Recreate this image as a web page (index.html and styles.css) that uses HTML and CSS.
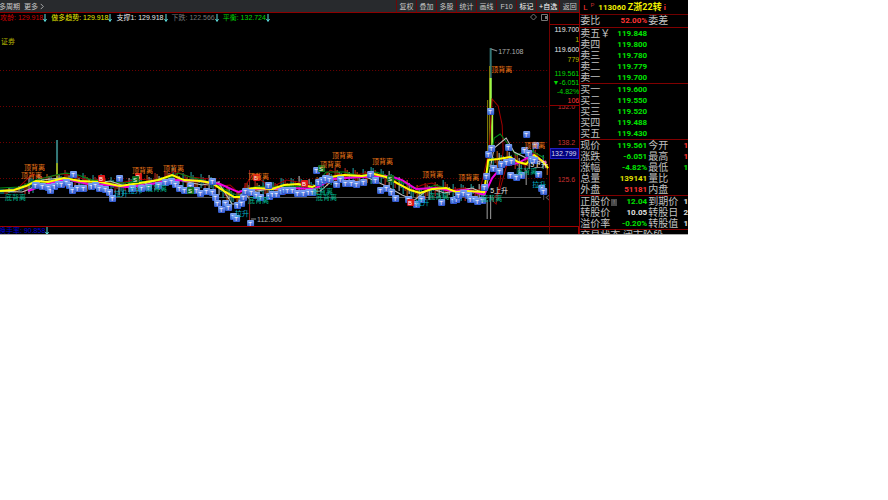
FILE: index.html
```html
<!DOCTYPE html>
<html lang="zh-CN">
<head>
    <meta charset="UTF-8">
    <meta name="viewport" content="width=device-width, initial-scale=1.0">
    <title>浙22转债 113060</title>
    <link rel="stylesheet" href="styles.css">
</head>
<body>
    <main class="terminal">
        <section class="main">
            <nav class="toolbar">
                <div class="periods">
                    <button type="button">多周期</button>
                    <button type="button">更多 <svg class="chevron" viewBox="0 0 4 8"><path d="M0.5 1 L3.5 4 L0.5 7"/></svg></button>
                </div>
                <div class="tools">
                    <button type="button">复权</button>
                    <button type="button">叠加</button>
                    <button type="button">多股</button>
                    <button type="button">统计</button>
                    <button type="button">画线</button>
                    <button type="button">F10</button>
                    <button type="button" class="bright">标记</button>
                    <button type="button" class="bright">+自选</button>
                    <button type="button">返回</button>
                </div>
            </nav>
            <div class="body">
                <div class="chart-col">
                    <div class="legend">
                        <span class="c-darkred">攻龄: 129.918<svg class="arrow" viewBox="0 0 4 8"><path d="M2 0V7M0.5 5L2 7.5L3.5 5"/></svg></span>
                        <span class="c-yellow">做多趋势: 129.918<svg class="arrow" viewBox="0 0 4 8"><path d="M2 0V7M0.5 5L2 7.5L3.5 5"/></svg></span>
                        <span class="c-white">支撑1: 129.918<svg class="arrow" viewBox="0 0 4 8"><path d="M2 0V7M0.5 5L2 7.5L3.5 5"/></svg></span>
                        <span class="c-dim">下跌: 122.566<svg class="arrow" viewBox="0 0 4 8"><path d="M2 0V7M0.5 5L2 7.5L3.5 5"/></svg></span>
                        <span class="c-green">平衡: 132.724<svg class="arrow" viewBox="0 0 4 8"><path d="M2 0V7M0.5 5L2 7.5L3.5 5"/></svg></span>
                        <svg class="corner" viewBox="0 0 18 8"><path d="M3.5 1L6.5 4L3.5 7L0.5 4Z"/><path d="M11.5 1.5H17.5V7.5H11.5Z"/><path class="fill" d="M15 3H17V6H15Z"/></svg>
                    </div>
                    <svg class="chart" id="chart" viewBox="0 22 549 204">
                        <defs>
                            <linearGradient id="blue" x1="0" y1="0" x2="0" y2="1">
                                <stop offset="0" stop-color="#7ea4f4"/>
                                <stop offset="1" stop-color="#2c54cc"/>
                            </linearGradient>
                        </defs>
                        <g class="grid">
                            <path d="M0 70.5H549M0 106.5H549M0 142.5H549M0 178.5H549"/>
                        </g>
                        <path class="level" d="M0 197.5H541M543.5 195V200M549 195L546 197.5L549 200"/>
                        <text class="stock" x="1" y="44">证券</text>
                        <g id="bars"></g>
                        <path class="spike" d="M57 140V165M490.500 48V110"/>
                        <path class="spike-hot" d="M57 163V186"/>
                        <path class="spike-olive" d="M489.500 66V160M487.500 100V165"/>
                        <path class="spike-lime" d="M490.500 78V115M492 112V150"/>
                        <path class="wick" d="M487 200V219M490.500 195V219M526 170V185"/>
                        <path class="drop" d="M249.500 170V222"/>
                        <g id="lines"></g>
                        <g id="marks"></g>
                        <g id="labels"></g>
                        <path class="leader" d="M491 49L497 51M251 219H256"/>
                        <text class="price" x="498" y="54">177.108</text>
                        <text class="price" x="257" y="222">112.900</text>
                    </svg>
                    <div class="sub">换手率: 90.858<svg class="arrow" viewBox="0 0 4 8"><path d="M2 0V7M0.5 5L2 7.5L3.5 5"/></svg></div>
                </div>
                <aside class="axis">
                    <div class="quotes">
                        <span class="c-white">119.700</span>
                        <span class="c-olive">1</span>
                        <span class="c-white">119.600</span>
                        <span class="c-olive">779</span>
                        <span class="c-green gap">119.561</span>
                        <span class="c-green">▼-6.051</span>
                        <span class="c-green">-4.82%</span>
                        <span class="c-red">106</span>
                    </div>
                    <div class="scale">
                        <span class="cut">152.0</span>
                        <span>138.2</span>
                        <span class="cursor">132.799</span>
                        <span>125.6</span>
                    </div>
                    <div class="axis-foot"></div>
                </aside>
            </div>
        </section>
        <aside class="side">
            <h1><span class="c-red">L</span><sup>P</sup><b>113060</b><b class="name">Z浙22转</b><span class="c-red info">i</span></h1>
            <table>
                <tbody class="tall">
                    <tr><th>委比</th><td class="c-red">52.00%</td><th>委差</th><td></td></tr>
                </tbody>
                <tbody>
                    <tr><th>卖五￥</th><td>119.848</td><th></th><td></td></tr>
                    <tr><th>卖四</th><td>119.800</td><th></th><td></td></tr>
                    <tr><th>卖三</th><td>119.780</td><th></th><td></td></tr>
                    <tr><th>卖二</th><td>119.779</td><th></th><td></td></tr>
                    <tr><th>卖一</th><td>119.700</td><th></th><td></td></tr>
                </tbody>
                <tbody>
                    <tr><th>买一</th><td>119.600</td><th></th><td></td></tr>
                    <tr><th>买二</th><td>119.550</td><th></th><td></td></tr>
                    <tr><th>买三</th><td>119.520</td><th></th><td></td></tr>
                    <tr><th>买四</th><td>119.488</td><th></th><td></td></tr>
                    <tr><th>买五</th><td>119.430</td><th></th><td></td></tr>
                </tbody>
                <tbody>
                    <tr><th>现价</th><td>119.561</td><th>今开</th><td class="c-red">1</td></tr>
                    <tr><th>涨跌</th><td>-6.051</td><th>最高</th><td class="c-red">1</td></tr>
                    <tr><th>涨幅</th><td>-4.82%</td><th>最低</th><td>1</td></tr>
                    <tr><th>总量</th><td class="c-yellow">139141</td><th>量比</th><td></td></tr>
                    <tr><th>外盘</th><td class="c-red">51181</td><th>内盘</th><td></td></tr>
                </tbody>
                <tbody>
                    <tr><th>正股价<i class="note">!</i></th><td>12.04</td><th>到期价</th><td class="c-white">1</td></tr>
                    <tr><th>转股价</th><td class="c-white">10.05</td><th>转股日</th><td class="c-white">2</td></tr>
                    <tr><th>溢价率</th><td>-0.20%</td><th>转股值</th><td class="c-white">1</td></tr>
                </tbody>
                <tbody>
                    <tr><th colspan="4">交易状态 闭市阶段 <b>15:00:0</b></th></tr>
                </tbody>
            </table>
        </aside>
    </main>
    <script src="chart.js"></script>
</body>
</html>
```

FILE: styles.css
```css
* {
    box-sizing: border-box;
}
body {
    margin: 0;
    background: #fff;
    font-family: 'Liberation Sans', 'Noto Sans CJK SC', sans-serif;
    font-size: 7px;
    line-height: 9px;
}
button {
    margin: 0;
    padding: 0;
    border: 0;
    background: none;
    color: #c8c8c8;
    font: inherit;
    cursor: pointer;
}
.terminal {
    display: grid;
    grid-template-columns: 1fr 109px;
    width: 77.5%;
    background: #000;
    border-bottom: 1px solid #aaa;
    overflow: hidden;
}
.main {
    min-width: 0;
}
.toolbar {
    display: flex;
    justify-content: space-between;
    height: 13px;
    background: #282a2d;
    border-bottom: 1px solid #8c0000;
}
.periods {
    display: flex;
    gap: 4px;
    margin-left: -1px;
}
.chevron {
    width: 4px;
    height: 7px;
    fill: none;
    stroke: #b8b8b8;
    vertical-align: -1px;
}
.tools {
    display: flex;
}
.tools button {
    min-width: 20px;
    padding: 0 2px;
    border-left: 1px solid #6c0808;
}
.tools .bright {
    color: #fff;
}
.body {
    display: grid;
    grid-template-columns: 1fr 30px;
}
.chart-col {
    min-width: 0;
}
.legend {
    display: flex;
    gap: 4px;
    height: 9px;
    padding-right: 1px;
    white-space: nowrap;
}
.arrow {
    width: 4px;
    height: 8px;
    fill: none;
    stroke: #5fe0e0;
    vertical-align: -2px;
}
.corner {
    width: 18px;
    height: 8px;
    margin-left: auto;
    fill: none;
    stroke: #777;
}
.corner .fill {
    fill: #777;
    stroke: none;
}
.c-white { color: #e8e8e8; }
.c-yellow { color: #e8e800; }
.c-olive { color: #b8b800; }
.c-green { color: #00d800; }
.c-red { color: #ff3434; }
.c-darkred { color: #d00000; }
.c-dim { color: #787878; }

.chart {
    display: block;
    width: 100%;
    font-size: 7px;
}
.grid {
    stroke: #700000;
    stroke-dasharray: 1 2;
}
.chart path {
    fill: none;
}
.level { stroke: #585858; }
.stock { fill: #b8b800; }
.spike { stroke: #347878; stroke-width: 2; }
.spike-hot { stroke: #90a820; stroke-width: 2; }
.spike-olive { stroke: #948c08; stroke-width: 1; }
.spike-lime { stroke: #a0f840; stroke-width: 2; }
.wick { stroke: #a0a0a0; }
.drop { stroke: #902020; }
.leader { stroke: #909090; }
.price { fill: #b0b0b0; }
.top { fill: #f07818; }
.bottom { fill: #00b890; }
.pull { fill: #00b0c8; }
.rise { fill: #e8e8e8; }
.badge-text {
    fill: #fff;
    font-size: 6px;
    text-anchor: middle;
}
.sub {
    height: 8px;
    margin-left: -2px;
    padding-left: 1px;
    border-top: 1px solid #a00000;
    color: #0000d8;
    line-height: 8px;
    white-space: nowrap;
}
.axis {
    display: flex;
    flex-direction: column;
    border-left: 1px solid #700000;
    text-align: right;
}
.quotes {
    display: flex;
    flex-direction: column;
    margin-top: 11px;
    border-top: 1px solid #8c0000;
    border-bottom: 1px solid #8c0000;
}
.quotes span {
    line-height: 10px;
}
.quotes span:nth-child(n+5) {
    line-height: 9px;
}
.quotes .gap {
    margin-top: 4px;
}
.scale {
    display: flex;
    flex: 1;
    flex-direction: column;
    color: #c83030;
}
.scale span {
    padding-right: 4px;
}
.scale .cut {
    height: 4px;
    margin-bottom: 28px;
    line-height: 1px;
    overflow: hidden;
}
.scale .cursor {
    margin: 1px 0 16px;
    padding-right: 3px;
    border: 1px solid #2020c0;
    background: #000080;
    color: #d8d8e8;
}
.axis-foot {
    height: 8px;
    border: 1px solid #a00000;
    border-bottom: 0;
    border-left: 0;
}
.side {
    height: 0;
    min-height: 100%;
    border-left: 1px solid #8c0000;
    overflow: hidden;
}
h1 {
    display: flex;
    height: 15px;
    margin: 0;
    padding-left: 3px;
    border-bottom: 1px solid #700000;
    color: #f0f000;
    font-family: Roboto, 'Noto Sans CJK SC', sans-serif;
    font-size: 8px;
    font-weight: normal;
    line-height: 15px;
    white-space: nowrap;
}
h1 sup {
    margin: 0 4px 0 3px;
    color: #c03030;
    font-size: 6px;
    line-height: 9px;
}
h1 .name {
    margin-left: 2px;
    font-size: 9px;
}
h1 .info {
    margin-left: 2px;
    font-weight: bold;
}
table {
    width: 100%;
    border-collapse: collapse;
    table-layout: fixed;
}
tbody + tbody {
    border-top: 1px solid #800000;
}
tr {
    height: 11px;
}
.tall tr {
    height: 12px;
}
th, td {
    padding: 0;
    line-height: 11px;
    white-space: nowrap;
}
th {
    color: #c0c0c0;
    font-size: 10px;
    font-weight: normal;
    text-align: left;
}
th b {
    font-family: Roboto, sans-serif;
    font-size: 8px;
}
td {
    color: #00e400;
    font-family: Roboto, sans-serif;
    font-size: 8px;
    font-weight: bold;
    text-align: right;
}
td.c-red { color: #ff3434; }
td.c-yellow { color: #e0e000; }
td.c-white { color: #e0e0e0; }
th:nth-child(1) { width: 34px; }
td:nth-child(2) { width: 33px; }
th:nth-child(3) { width: 34px; padding-left: 1px; }
.note {
    display: inline-block;
    width: 6px;
    height: 7px;
    margin-left: 1px;
    background: #484848;
    color: #999;
    font-size: 6px;
    font-style: normal;
    line-height: 7px;
    text-align: center;
    vertical-align: 1px;
}
```

FILE: chart.js
```javascript
const NS = 'http://www.w3.org/2000/svg';

function add(parent, tag, attrs, text) {
    const el = document.createElementNS(NS, tag);
    for (const key in attrs) el.setAttribute(key, attrs[key]);
    if (text) el.textContent = text;
    document.getElementById(parent).appendChild(el);
}

// trend lines: [color, width, points]
const trend = [[0,191],[14,190],[26,186],[36,181],[48,182],[64,178],[80,181],[100,182],[120,186],[140,183],[158,180],[172,175],[184,180],[200,181],[212,183],[224,191],[234,197],[240,197],[247,189],[255,188],[272,189],[284,185],[298,184],[312,187],[320,183],[330,177],[344,175],[362,176],[374,174],[386,177],[397,183],[410,190],[420,193],[432,189],[446,188],[456,192],[466,191],[484,192],[488,160],[498,159],[510,157],[518,162],[526,164],[534,155],[542,161],[548,168]];
const lines = [
    ['#a00000', 1, [[20,186],[32,174],[44,178],[62,174],[76,176],[90,182],[120,183],[138,179],[160,181],[174,171],[190,177],[210,179],[222,186],[230,185],[240,194],[252,175],[272,187],[286,180],[304,183],[318,188],[330,170],[344,176],[370,173],[384,175],[410,190],[422,185],[432,183],[446,191],[462,188],[480,190],[489,150],[492,99],[498,106],[502,125],[503,150],[500,180],[496,204],[492,200],[499,192],[508,160],[525,165],[534,152],[546,165]]],
    ['#008c18', 1, [[0,188],[20,187],[36,180],[56,175],[66,173],[78,175],[92,180],[122,183],[152,181],[172,177],[178,173],[190,177],[210,182],[238,196],[254,187],[286,186],[314,187],[326,172],[344,172],[360,176],[376,172],[390,177],[420,190],[436,185],[456,192],[484,191],[494,138],[500,134],[507,143],[516,155],[530,150],[544,158]]],
    ['#c0c0c0', 1, [[0,191],[22,192],[30,189],[42,180],[60,178],[90,184],[110,181],[130,188],[158,180],[178,180],[202,185],[218,182],[232,204],[243,204],[250,192],[270,189],[298,192],[320,191],[334,179],[364,176],[386,186],[402,195],[414,200],[430,188],[444,193],[472,188],[485,194],[494,148],[506,138],[514,152],[530,160],[546,163]]],
    ['#f000e0', 2, [[28,191],[44,185],[66,179],[88,184],[110,185],[126,187],[146,185],[172,180],[200,181],[220,184],[238,192],[250,189],[290,188],[314,189],[332,179],[360,177],[390,176],[402,180],[416,189],[436,188],[452,191],[468,190],[484,195],[492,178],[502,166],[518,163],[532,155],[546,163]]],
    ['#ffff00', 2, trend]
];
lines.forEach(([color, width, pts]) => {
    add('lines', 'polyline', { points: pts.join(' '), fill: 'none', stroke: color, 'stroke-width': width });
});

// trend height at a given x
function trendY(x) {
    let i = 1;
    while (i < trend.length - 1 && trend[i][0] < x) i++;
    const [x0, y0] = trend[i - 1];
    const [x1, y1] = trend[i];
    return y0 + (y1 - y0) * (x - x0) / (x1 - x0);
}

const palette = ['#20a8a8', '#c82828', '#c8c8c8', '#20a8a8', '#d06010'];
for (let x = 1, n = 0; x < 548; x += 2, n++) {
    const y = trendY(x);
    const up = x < 24 ? 2 : n * 7 % 9;
    const down = x < 24 ? 1 : n * 5 % 9;
    add('bars', 'path', { d: `M${x} ${Math.round(y - up)}V${Math.round(y + down + 2)}`, stroke: palette[n * 3 % 5] });
}

// signal labels
const labels = {
    top: ['顶背离', [[24,170],[21,178],[132,173],[163,171],[248,179],[332,158],[320,167],[372,164],[422,177],[458,180],[491,72],[524,148]]],
    bottom: ['底背离', [[5,200],[146,191],[248,203],[312,194],[316,200],[428,199],[481,201],[516,174]]],
    pull: ['拉升', [[114,196],[128,193],[235,216],[415,205],[532,187]]],
    rise: ['5上升', [[490,193],[530,167]]]
};
for (const name in labels) {
    const [text, spots] = labels[name];
    spots.forEach(([x, y]) => add('labels', 'text', { class: name, x, y }, text));
}

// trade badges
const marks = {
    T: ['url(#blue)', [[35,185],[42,186],[48,187],[50,190],[54,186],[58,184],[61,184],[66,182],[69,185],[73,174],[72,190],[77,188],[83,188],[91,186],[95,185],[99,188],[105,189],[109,192],[112,198],[119,178],[132,188],[141,188],[148,187],[158,185],[165,182],[171,181],[175,184],[179,188],[184,190],[190,186],[196,190],[200,193],[206,191],[212,181],[212,192],[215,197],[217,203],[221,209],[225,203],[228,207],[233,216],[236,218],[237,205],[241,203],[243,197],[245,191],[251,192],[250,223],[256,195],[260,197],[268,185],[269,196],[272,194],[276,194],[281,191],[284,190],[287,190],[292,190],[297,193],[303,193],[308,192],[312,192],[316,170],[318,182],[322,180],[325,178],[329,179],[336,184],[340,179],[345,183],[351,183],[356,184],[363,182],[370,174],[375,180],[380,190],[386,188],[391,192],[395,198],[408,199],[416,204],[421,199],[441,202],[453,200],[456,199],[458,195],[463,193],[468,195],[470,199],[474,199],[477,201],[482,200],[484,187],[486,176],[488,154],[491,148],[490,111],[493,168],[499,171],[501,164],[506,162],[508,147],[511,161],[510,175],[516,177],[521,175],[526,134],[524,150],[528,153],[531,159],[535,145],[534,160],[538,174],[541,188],[543,191]]],
    B: ['#dc1818', [[101,178],[138,176],[256,177],[304,183],[410,202]]],
    S: ['#107020', [[135,179],[190,190],[321,168],[390,178]]]
};
for (const letter in marks) {
    const [fill, spots] = marks[letter];
    spots.forEach(([x, y]) => {
        add('marks', 'rect', { x: x - 3, y: y - 3, width: 7, height: 7, rx: 1, fill });
        add('marks', 'text', { class: 'badge-text', x, y: y + 3 }, letter);
    });
}
```
